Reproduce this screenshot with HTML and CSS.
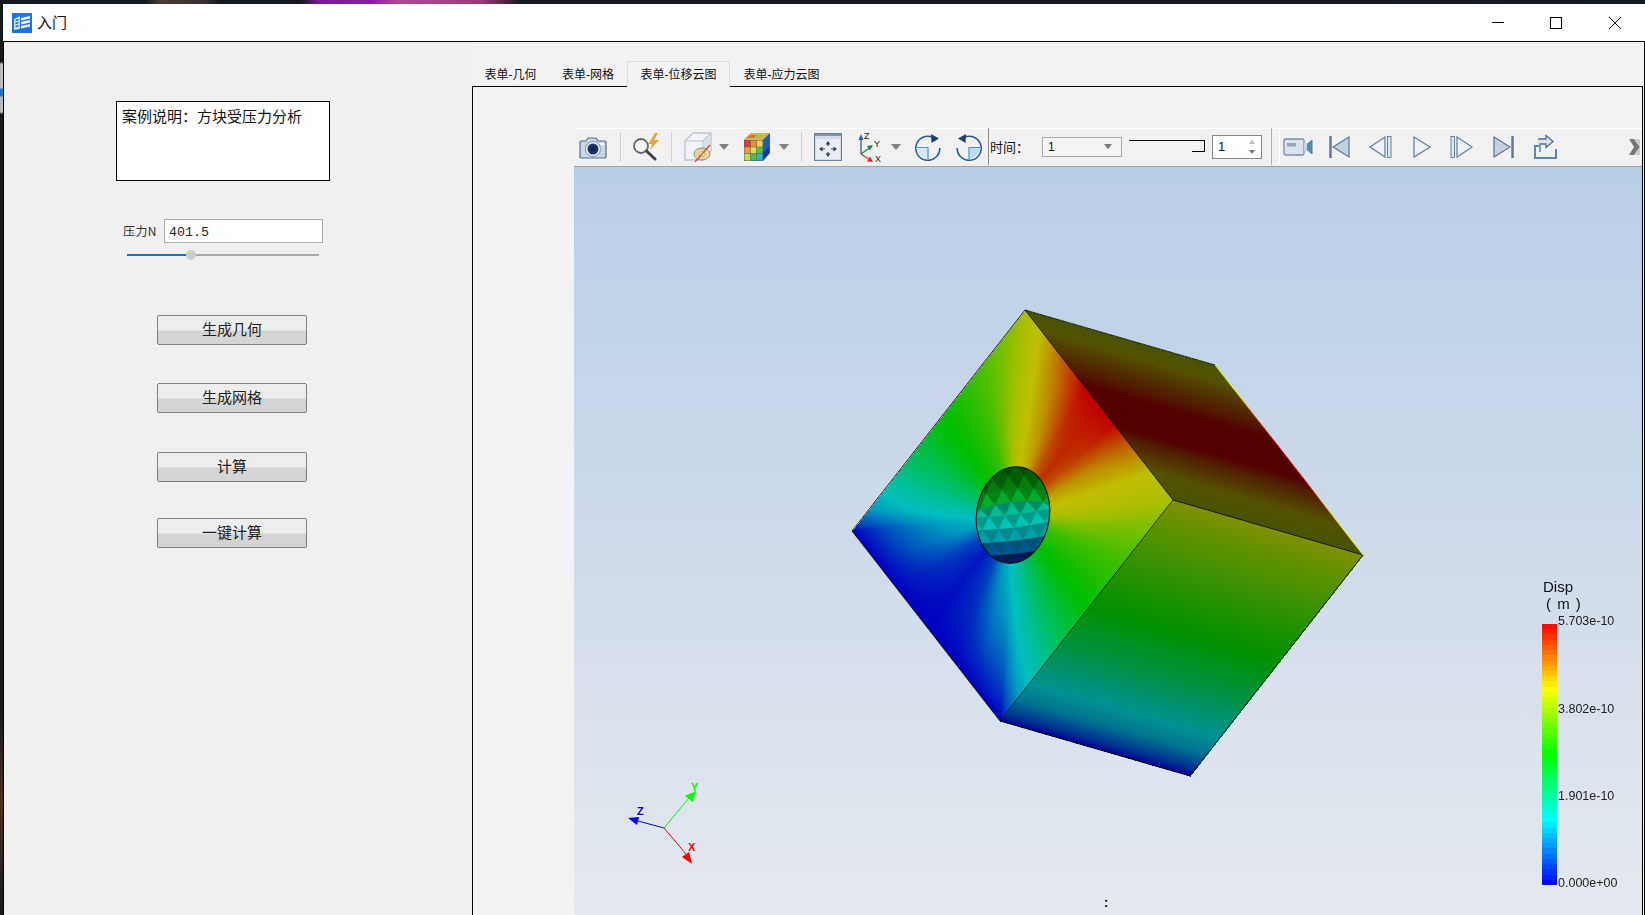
FILE: index.html
```html
<!DOCTYPE html>
<html lang="zh">
<head>
<meta charset="utf-8">
<title>入门</title>
<link rel="stylesheet" href="styles.css">
</head>
<body>
<div class="desk-top"></div>
<div class="shell">
  <div class="desk-left"></div>
  <div class="window">
    <header class="titlebar">
      <svg class="app-icon" viewBox="0 0 20 20">
        <rect width="20" height="20" fill="#1b74e4"/>
        <path d="M2 6 L8 3 L8 16 L2 17 Z" fill="#cfe2fb"/>
        <path d="M3.5 7.5 L6.5 6.5 M3.5 10.5 L6.5 9.5 M3.5 13.5 L6.5 12.5" stroke="#1b74e4" stroke-width="1.4"/>
        <path d="M9 5 L18 3 L18 5.5 L9 7.5 Z M9 9 L18 7 L18 9.5 L9 11.5 Z M9 13 L18 11 L18 13.5 L9 15.5 Z" fill="#fff"/>
      </svg>
      <span class="title">入门</span>
      <div class="win-buttons">
        <svg class="wb wb-min" viewBox="0 0 12 12"><path d="M0 5.5 H12" stroke="#000"/></svg>
        <svg class="wb wb-max" viewBox="0 0 12 12"><rect x=".5" y=".5" width="11" height="11" fill="none" stroke="#000"/></svg>
        <svg class="wb wb-close" viewBox="0 0 12 12"><path d="M0 0 L12 12 M12 0 L0 12" stroke="#000" stroke-width="1"/></svg>
      </div>
    </header>
    <div class="content">
      <aside class="form">
        <div class="note">案例说明&#xFF1A;方块受压力分析</div>
        <div class="pressure">
          <label class="pressure-label">压力N</label>
          <div class="pressure-input">401.5</div>
        </div>
        <div class="slider">
          <div class="slider-fill"></div>
          <div class="slider-knob"></div>
          <div class="slider-rest"></div>
        </div>
        <button class="btn btn-1">生成几何</button>
        <button class="btn btn-2">生成网格</button>
        <button class="btn btn-3">计算</button>
        <button class="btn btn-4">一键计算</button>
      </aside>
      <main class="tabs-area">
        <nav class="tabbar">
          <div class="tab tab-a">表单-几何</div>
          <div class="tab tab-b">表单-网格</div>
          <div class="tab tab-c active">表单-位移云图</div>
          <div class="tab tab-c">表单-应力云图</div>
        </nav>
        <section class="pane">
          <div class="toolbar">
            <svg class="ic i-cam" viewBox="0 0 28 24">
              <path d="M2 6 H7 L9 3 H17 L19 6 H26 Q27 6 27 7 V22 Q27 23 26 23 H2 Q1 23 1 22 V7 Q1 6 2 6Z" fill="#c9d6e8" stroke="#55718f" stroke-width="1.2"/>
              <circle cx="14" cy="14" r="7.5" fill="#eef3f9" stroke="#7d95b5"/>
              <circle cx="14" cy="14" r="5.5" fill="#1d3566"/>
              <circle cx="14" cy="14" r="2.5" fill="#13244a"/>
              <rect x="21" y="8" width="4" height="2" fill="#fff"/>
            </svg>
            <i class="sep s-1"></i>
            <svg class="ic i-mag" viewBox="0 0 30 30">
              <path d="M24 1 L17 12 H21 L19 18 L28 8 H23 L27 1Z" fill="#eda33a"/>
              <circle cx="10" cy="14" r="7" fill="#f4f6f8" stroke="#666a70" stroke-width="1.8"/>
              <path d="M15.5 19 L24 27" stroke="#3f424a" stroke-width="3" stroke-linecap="round"/>
            </svg>
            <i class="sep s-2"></i>
            <svg class="ic i-box" viewBox="0 0 28 30">
              <path d="M1 9 L9 1 H27 V19 L19 28 H1Z" fill="#f0f3f7" stroke="#bcc5d2" stroke-width="1.4"/>
              <path d="M1 9 H19 V28 M19 9 L27 1" fill="none" stroke="#bcc5d2" stroke-width="1.2"/>
              <path d="M19.5 9 L26.5 2 V15 L19.5 20Z" fill="#d9dfe9"/>
              <ellipse cx="18" cy="22" rx="8" ry="6" fill="#e9d69a" stroke="#8a8e98"/>
              <ellipse cx="18" cy="22" rx="3" ry="2.3" fill="#f5efcd" stroke="#b99b52" stroke-width=".7"/>
              <path d="M11 30 L26 13" stroke="#d0532c" stroke-width="1.3"/>
            </svg>
            <svg class="ic i-arrow a-1" viewBox="0 0 10 6"><path d="M0 0 H10 L5 6Z" fill="#808080"/></svg>
            <svg class="ic i-cube" viewBox="0 0 28 30">
              <path d="M1 8 L8 1 H27 V21 L20 29 H1Z" fill="#3f5f9f"/>
              <path d="M1 8 H20 L27 1 H8Z" fill="#d9b24e"/>
              <path d="M3 6 H11 L14 3 H8Z" fill="#e2733b"/><path d="M11 6 H19 L23 3 H14Z" fill="#9fc25a"/>
              <rect x="1.5" y="8.5" width="6" height="6.5" fill="#e33b2c"/><rect x="7.5" y="8.5" width="6" height="6.5" fill="#ee8d2d"/><rect x="13.5" y="8.5" width="6" height="6.5" fill="#f2d531"/>
              <rect x="1.5" y="15" width="6" height="6.5" fill="#ef9d2d"/><rect x="7.5" y="15" width="6" height="6.5" fill="#e8dd3a"/><rect x="13.5" y="15" width="6" height="6.5" fill="#59c04a"/>
              <rect x="1.5" y="21.5" width="6" height="7" fill="#cddb3d"/><rect x="7.5" y="21.5" width="6" height="7" fill="#4dbb4f"/><rect x="13.5" y="21.5" width="6" height="7" fill="#2fb3c4"/>
              <path d="M20 8.5 L26.5 2 V14 L20 21Z" fill="#1e5fb4"/><path d="M20 21 L26.5 14 V21 L20 28.5Z" fill="#1636a3"/>
              <path d="M1 15 H20 M1 21.5 H20 M7.5 8 V29 M13.5 8 V29" stroke="#5c6a4a" stroke-width=".5"/>
            </svg>
            <svg class="ic i-arrow a-2" viewBox="0 0 10 6"><path d="M0 0 H10 L5 6Z" fill="#808080"/></svg>
            <i class="sep s-3"></i>
            <svg class="ic i-fit" viewBox="0 0 28 28">
              <rect x=".5" y=".5" width="27" height="27" fill="#d4dae5" stroke="#6a7f9d"/>
              <rect x="1" y="1" width="26" height="2" fill="#7c92b2"/>
              <rect x="2" y="6" width="24" height="20" fill="#e9edf2"/>
              <path d="M14 8 L11.5 11.5 H16.5Z M14 24 L11.5 20.5 H16.5Z M5 16 L8.5 13.5 V18.5Z M23 16 L19.5 13.5 V18.5Z" fill="#2d3f5c"/>
              <path d="M14 11 V13 M14 19 V21 M8 16 H11 M17 16 H20" stroke="#2d3f5c" stroke-width="1.2"/>
            </svg>
            <svg class="ic i-axes" viewBox="0 0 24 32">
              <path d="M3 23 V7" stroke="#2f5fb0" stroke-width="1.3"/><path d="M3 3 L0.5 9 H5.5Z" fill="#2f5fb0"/>
              <path d="M3 23 L13 16" stroke="#1f8a3c" stroke-width="1.3"/><path d="M15 14 L9 15 L12 19.5Z" fill="#1f8a3c"/>
              <path d="M3 23 L12 29" stroke="#d83232" stroke-width="1.3"/><path d="M15 31 L9 30.5 L12 25.5Z" fill="#d83232"/>
              <text x="6" y="8" class="axes-t">Z</text><text x="16" y="16" class="axes-t">Y</text><text x="17" y="31" class="axes-t">X</text>
            </svg>
            <svg class="ic i-arrow a-3" viewBox="0 0 10 6"><path d="M0 0 H10 L5 6Z" fill="#808080"/></svg>
            <svg class="ic i-rot" viewBox="0 0 26 28">
              <path d="M18 4.5 A12 12 0 1 0 24.8 15" fill="none" stroke="#2c5a92" stroke-width="1.6"/>
              <path d="M16 1 L24 5.5 L16.5 10Z" fill="#1f3f6f"/>
              <path d="M1 15 H12.5 V26 Q5 25 1 15Z" fill="#d6e6f4"/>
              <path d="M1 14.5 H13 V26" fill="none" stroke="#3b9bd5" stroke-width="1.2"/>
            </svg>
            <svg class="ic i-rot2" viewBox="0 0 26 28">
              <path d="M8 4.5 A12 12 0 1 1 1.2 15" fill="none" stroke="#2c5a92" stroke-width="1.6"/>
              <path d="M10 1 L2 5.5 L9.5 10Z" fill="#1f3f6f"/>
              <path d="M25 15 H13.5 V26 Q21 25 25 15Z" fill="#bcdcf2"/>
              <path d="M25 14.5 H13 V26" fill="none" stroke="#3b9bd5" stroke-width="1.2"/>
            </svg>
            <i class="sep-dark"></i>
            <span class="time-label">时间&#xFF1A;</span>
            <div class="combo"><span>1</span><svg class="combo-arrow" viewBox="0 0 8 5"><path d="M0 0 H8 L4 5Z" fill="#777"/></svg></div>
            <div class="t-slider"><div class="t-line"></div><div class="t-handle"></div></div>
            <div class="spin"><span>1</span>
              <svg class="spin-arrows" viewBox="0 0 6 14"><path d="M3 0 L6 4 H0Z" fill="#bbb"/><path d="M3 14 L6 10 H0Z" fill="#777"/></svg>
            </div>
            <i class="sep s-4"></i>
            <div class="toolbar2">
              <svg class="ic i-rec" viewBox="0 0 30 20">
                <rect x="1" y="2" width="20" height="16" rx="1.5" fill="#dde3ec" stroke="#7a90ad" stroke-width="1.3"/>
                <rect x="4" y="6" width="9" height="3.5" fill="#97a6ba"/>
                <path d="M21 10 L29 3 V17Z" fill="#4f8fb8" stroke="#5a7a9f"/>
                <rect x="21" y="6" width="3" height="8" fill="#bcd9ee"/>
              </svg>
              <svg class="ic i-first" viewBox="0 0 21 24"><path d="M1.5 1 V23" stroke="#5a7699" stroke-width="2.4"/><path d="M20 2 L4 12 L20 22Z" fill="#c4cfdf" stroke="#5a7699" stroke-width="1.2"/></svg>
              <svg class="ic i-prev" viewBox="0 0 24 24"><path d="M17 2 L2 12 L17 22Z" fill="#f0f2f6" stroke="#6a84a8" stroke-width="1.3"/><rect x="19.5" y="1.5" width="3.5" height="21" fill="#dfe5ee" stroke="#6a84a8"/></svg>
              <svg class="ic i-play" viewBox="0 0 18 24"><path d="M1 2 L17 12 L1 22Z" fill="#f0f2f6" stroke="#6a84a8" stroke-width="1.3"/></svg>
              <svg class="ic i-next" viewBox="0 0 24 24"><rect x="1" y="1.5" width="3.5" height="21" fill="#dfe5ee" stroke="#6a84a8"/><path d="M7 2 L22 12 L7 22Z" fill="#f0f2f6" stroke="#6a84a8" stroke-width="1.3"/></svg>
              <svg class="ic i-last" viewBox="0 0 21 24"><path d="M1 2 L17 12 L1 22Z" fill="#c4cfdf" stroke="#5a7699" stroke-width="1.2"/><path d="M19.5 1 V23" stroke="#5a7699" stroke-width="2.4"/></svg>
              <svg class="ic i-export" viewBox="0 0 24 26">
                <path d="M7 12 H2 V24 H23 V15" fill="none" stroke="#5f84ae" stroke-width="2"/>
                <path d="M7 18 V10 H13 V13.5 L20 7.5 L13 1.5 V5 H5" fill="#dce6f1" stroke="#4d729c" stroke-width="1.3"/>
              </svg>
              <svg class="ic i-ext" viewBox="0 0 11 16"><path d="M0 0 H5 L11 8 L5 16 H0 L5 8Z" fill="#777"/><path d="M5 0 L11 8 L5 16 H11 V0Z" fill="#ccc"/></svg>
            </div>
          </div>
          <div class="viewport">
            <canvas id="scene" class="scene" width="1069" height="748"></canvas>
            <svg class="triad" viewBox="0 0 110 100">
              <path d="M44 56 L18 49" stroke="#00f"/><path d="M8 46 L19 45 L17 53Z" fill="#00f"/>
              <path d="M44 56 L69 26" stroke="#0f0"/><path d="M76 19 L73 30 L65 24Z" fill="#0f0"/>
              <path d="M44 56 L66 82" stroke="#f00"/><path d="M72 92 L62 85 L69 80Z" fill="#f00"/>
              <text x="17" y="43" class="triad-t t-z">Z</text>
              <text x="71" y="19" class="triad-t t-y">Y</text>
              <text x="68" y="79" class="triad-t t-x">X</text>
            </svg>
            <div class="legend-title">Disp<span class="legend-unit">( m )</span></div>
            <div id="bar" class="legend-bar"></div>
            <div class="legend-val v-1">5.703e-10</div>
            <div class="legend-val v-2">3.802e-10</div>
            <div class="legend-val v-3">1.901e-10</div>
            <div class="legend-val v-4">0.000e+00</div>
            <div class="dots">:</div>
          </div>
        </section>
      </main>
    </div>
  </div>
</div>
<script src="scene.js"></script>
</body>
</html>
```
FILE: styles.css
```css
* { box-sizing: border-box; }
html, body { margin: 0; height: 100%; overflow: hidden; }
body {
  display: flex; flex-direction: column; height: 915px; background: #14181f;
  font-family: "Noto Sans CJK SC", "Liberation Sans", sans-serif;
}
.desk-top {
  height: 4px; flex: none;
  background: linear-gradient(90deg, #14181f 0, #14181f 145px, #4a3a35 160px, #3a3030 205px, #14181f 220px, #14181f 300px, #7a1a9a 320px, #8a1aa8 370px, #b04a90 400px, #a03878 480px, #1a1a24 520px, #14181f 100%);
}
.shell { flex: 1; display: flex; min-height: 0; }
.desk-left {
  width: 3px; flex: none;
  background: linear-gradient(180deg, #14181f 0, #14181f 58px, #b8bcc2 60px, #b8bcc2 84px, #1e78c8 85px, #1e78c8 92px, #b8bcc2 93px, #b8bcc2 108px, #14181f 110px, #14181f 700px, #4a3020 800px, #14181f 100%);
}
.window { flex: 1; display: flex; flex-direction: column; min-width: 0; }

.titlebar {
  height: 38px; flex: none; background: #fff; border-bottom: 1px solid #000;
  display: flex; align-items: center; padding-left: 9px;
}
.app-icon { width: 20px; height: 20px; }
.title { margin-left: 5px; padding-bottom: 2px; font-size: 15px; color: #111; }
.win-buttons { margin-left: auto; display: flex; align-items: center; }
.wb { width: 12px; height: 12px; display: block; }
.wb-max { margin-left: 46px; }
.wb-close { margin-left: 47px; margin-right: 24px; }

.content {
  flex: 1; display: flex; min-height: 0; background: #f0f0f0;
  border-left: 1px solid #000; border-right: 1px solid #000;
}
.form { width: 468px; flex: none; display: flex; flex-direction: column; align-items: flex-start; }
.note {
  margin: 59px 0 0 112px; width: 214px; height: 80px; background: #fff; border: 1px solid #000;
  font-size: 15px; line-height: 18px; padding: 5px 0 0 5px; color: #111;
}
.pressure { display: flex; align-items: center; margin: 38px 0 0 119px; height: 24px; }
.pressure-label { width: 41px; padding-bottom: 2px; font-size: 12px; letter-spacing: .4px; color: #333; }
.pressure-input {
  width: 159px; height: 24px; background: #fff; border: 1px solid #aaa;
  font: 13.3px/24px "Liberation Mono", monospace; padding: 1px 0 0 4px; color: #222;
}
.slider { position: relative; display: flex; align-items: center; margin: 6px 0 0 123px; width: 192px; height: 12px; }
.slider-fill { width: 59px; height: 2px; background: #1a6fc0; }
.slider-rest { flex: 1; height: 2px; background: #aaa; }
.slider-knob { width: 10px; height: 10px; border-radius: 50%; background: #cdcdcd; flex: none; }

.btn {
  display: block; margin-left: 153px; width: 150px; height: 30px; padding: 0 0 2px;
  border: 1px solid #808080; border-radius: 2px;
  background: linear-gradient(180deg, #ededed 0, #ededed 50%, #d4d4d4 54%, #d4d4d4 100%);
  font: 15px/26px "Noto Sans CJK SC", sans-serif; color: #222;
}
.btn-1 { margin-top: 54px; }
.btn-2 { margin-top: 38px; }
.btn-3 { margin-top: 39px; }
.btn-4 { margin-top: 36px; }

.tabs-area { flex: 1; min-width: 0; display: flex; flex-direction: column; padding-right: 1px; background: #f2f2f2; }
.tabbar { height: 44px; flex: none; display: flex; align-items: flex-end; position: relative; z-index: 1; }
.tab { height: 25px; text-align: center; font: 12px/29px "Liberation Sans", "Noto Sans CJK SC", sans-serif; color: #111; }
.tab-a { width: 77px; }
.tab-b { width: 78px; }
.tab-c { width: 103px; }
.active {
  background: #f2f2f2; border: 1px solid #dcdcdc; border-bottom: 0;
  line-height: 27px; margin-bottom: -1px; height: 26px;
}
.pane {
  flex: 1; min-height: 0; display: flex; flex-direction: column; overflow: hidden;
  border: 1px solid #000; border-bottom: 0; padding: 41px 0 0 101px; background: #f2f2f2;
}

.toolbar {
  height: 39px; flex: none; display: flex; align-items: center; padding-bottom: 2px;
  background: #f1f1f1; border-top: 1px solid #fff; border-bottom: 1px solid #a2a2a2;
}
.ic { display: block; flex: none; }
.sep { display: block; width: 1px; height: 30px; background: #d0d0d0; flex: none; }
.sep-dark { display: block; width: 1px; height: 37px; background: #8c8c8c; flex: none; margin-left: 6px; }
.i-cam { width: 28px; height: 24px; margin-left: 5px; }
.s-1 { margin-left: 13px; }
.i-mag { width: 30px; height: 30px; margin-left: 10px; }
.s-2 { margin-left: 10px; }
.i-box { width: 28px; height: 30px; margin-left: 12px; }
.i-arrow { width: 10px; height: 6px; }
.a-1 { margin-left: 7px; }
.i-cube { width: 28px; height: 30px; margin-left: 14px; }
.a-2 { margin-left: 8px; }
.s-3 { margin-left: 12px; }
.i-fit { width: 28px; height: 28px; margin-left: 12px; }
.i-axes { width: 24px; height: 32px; margin-left: 16px; }
.axes-t { font: 9px "Liberation Sans", sans-serif; fill: #222; }
.a-3 { margin-left: 9px; }
.i-rot { width: 26px; height: 28px; margin-left: 14px; }
.i-rot2 { width: 26px; height: 28px; margin-left: 15px; }
.time-label { width: 39px; margin-left: 1px; font-size: 13px; color: #111; white-space: nowrap; flex: none; }
.combo {
  width: 80px; height: 20px; margin-left: 13px; flex: none; border: 1px solid #aaa; background: #f4f4f4;
  display: flex; align-items: center; justify-content: space-between; padding: 0 9px 0 5px;
  font: 12px "Liberation Sans", sans-serif; color: #111;
}
.combo-arrow { width: 8px; height: 5px; }
.t-slider { position: relative; width: 76px; height: 14px; margin-left: 7px; flex: none; }
.t-line { height: 1.5px; background: #000; }
.t-handle { position: absolute; right: 0; top: 1px; width: 13px; height: 11px; border-right: 1px solid #000; border-bottom: 1px solid #000; }
.spin {
  width: 50px; height: 24px; margin-left: 7px; flex: none; background: #fff; border: 1px solid #888;
  display: flex; align-items: center; justify-content: space-between; padding: 0 6px 0 5px;
  font: 13px "Liberation Sans", sans-serif; color: #111;
}
.spin-arrows { width: 6px; height: 14px; }
.s-4 { margin-left: 9px; height: 37px; background: #b0b0b0; }
.toolbar2 {
  flex: 1; align-self: stretch; display: flex; align-items: center; margin-left: 7px;
  border-left: 1px solid #fff; min-width: 0;
}
.i-rec { width: 30px; height: 20px; margin-left: 3px; }
.i-first { width: 21px; height: 24px; margin-left: 16px; }
.i-prev { width: 24px; height: 24px; margin-left: 18px; }
.i-play { width: 18px; height: 24px; margin-left: 21px; }
.i-next { width: 24px; height: 24px; margin-left: 19px; }
.i-last { width: 21px; height: 24px; margin-left: 19px; }
.i-export { width: 24px; height: 26px; margin-left: 19px; }
.i-ext { width: 11px; height: 16px; margin-left: auto; margin-right: 2px; }

.viewport {
  flex: 1; position: relative; min-height: 0; overflow: hidden;
  background: linear-gradient(180deg, #b9cde4 0, #e5e9ef 748px);
}
.scene { position: absolute; left: 0; top: 0; }
.triad { position: absolute; left: 46px; top: 605px; width: 110px; height: 100px; }
.triad path { stroke-width: 1; }
.triad-t { font: bold 11px "Liberation Sans", sans-serif; }
.t-z { fill: #00f; } .t-y { fill: #0f0; } .t-x { fill: #f00; }
.legend-title { position: absolute; left: 969px; top: 411px; font: 15px/17px "Liberation Sans", sans-serif; color: #111; }
.legend-unit { display: block; padding-left: 3px; word-spacing: 2px; }
.legend-bar { position: absolute; left: 968px; top: 457px; width: 15px; height: 261px; }
.legend-val { position: absolute; left: 984px; font: 12.5px/14px "Liberation Sans", sans-serif; color: #222; }
.v-1 { top: 447px; } .v-2 { top: 535px; } .v-3 { top: 622px; } .v-4 { top: 709px; }
.dots { position: absolute; left: 530px; top: 728px; font: bold 13px/16px "Liberation Sans", sans-serif; color: #000; }
```
FILE: scene.js
```js
(function () {
  var ox = 574, oy = 167;
  var cv = document.getElementById('scene');
  var ctx = cv.getContext('2d');
  var W = cv.width, H = cv.height;
  var img = ctx.createImageData(W, H);

  function lut(t, x) {
    if (x <= t[0][0]) return t[0][1];
    for (var i = 1; i < t.length; i++) {
      if (x <= t[i][0]) {
        var k = (x - t[i - 1][0]) / (t[i][0] - t[i - 1][0]);
        return t[i - 1][1] + k * (t[i][1] - t[i - 1][1]);
      }
    }
    return t[t.length - 1][1];
  }
  function ramp(f) {
    f = Math.max(0, Math.min(1, f)) * 4;
    if (f < 1) return [0, f, 1];
    if (f < 2) return [0, 1, 2 - f];
    if (f < 3) return [f - 2, 1, 0];
    return [1, 4 - f, 0];
  }
  var edgeA = [[0, 0.0], [0.03, 0.08], [0.1, 0.2], [0.2, 0.27], [0.35, 0.39], [0.52, 0.5], [0.8, 0.62], [1, 0.72]];
  var edgeTC = [[0, 0.72], [0.1, 0.75], [0.26, 0.88], [0.4, 1], [0.6, 1], [0.7, 0.88], [0.85, 0.75], [1, 0.72]];
  var hub = [[0, 0.93], [12, 0.88], [25, 0.79], [38, 0.75], [50, 0.72], [65, 0.58], [80, 0.52], [90, 0.5], [110, 0.38], [127, 0.28], [145, 0.22], [160, 0.1], [180, 0.03]];

  function faceA(a, b) {
    var da = a - 0.5, db = b - 0.5;
    var s = Math.min(1, 2 * Math.max(Math.abs(da), Math.abs(db)));
    var phi = Math.abs(Math.atan2(db, da)) * 180 / Math.PI;
    var h = lut(hub, phi);
    var e;
    if (s < 1e-4) return h;
    var ba = 0.5 + da / s, bb = 0.5 + db / s;
    if (ba >= 0.999) e = lut(edgeTC, bb);
    else if (ba <= 0.001) e = 0;
    else e = lut(edgeA, ba);
    var w = Math.pow(s, 2.2);
    return h * (1 - w) + e * w;
  }
  var L = [852, 531], T = [1025, 310], B = [1000, 721], C = [1173, 500], Rt = [1215, 365], R = [1363, 555], Bo = [1190, 776];
  var faces = [
    { o: L, e1: [T[0] - L[0], T[1] - L[1]], e2: [B[0] - L[0], B[1] - L[1]], shade: 0.75, f: faceA },
    { o: T, e1: [Rt[0] - T[0], Rt[1] - T[1]], e2: [C[0] - T[0], C[1] - T[1]], shade: 0.32, f: function (u, v) { return lut(edgeTC, v); } },
    { o: C, e1: [R[0] - C[0], R[1] - C[1]], e2: [B[0] - C[0], B[1] - C[1]], shade: 0.57, f: function (u, w) { return lut(edgeA, 1 - w); } }
  ];
  faces.forEach(function (fc) {
    var det = fc.e1[0] * fc.e2[1] - fc.e1[1] * fc.e2[0];
    var xs = [0, fc.e1[0], fc.e2[0], fc.e1[0] + fc.e2[0]], ys = [0, fc.e1[1], fc.e2[1], fc.e1[1] + fc.e2[1]];
    var x0 = Math.floor(fc.o[0] + Math.min.apply(0, xs)), x1 = Math.ceil(fc.o[0] + Math.max.apply(0, xs));
    var y0 = Math.floor(fc.o[1] + Math.min.apply(0, ys)), y1 = Math.ceil(fc.o[1] + Math.max.apply(0, ys));
    for (var y = y0; y <= y1; y++) {
      for (var x = x0; x <= x1; x++) {
        var dx = x - fc.o[0], dy = y - fc.o[1];
        var p = (dx * fc.e2[1] - dy * fc.e2[0]) / det;
        var q = (fc.e1[0] * dy - fc.e1[1] * dx) / det;
        if (p < 0 || p > 1 || q < 0 || q > 1) continue;
        var c = ramp(fc.f(p, q));
        var i = ((y - oy) * W + (x - ox)) * 4;
        img.data[i] = c[0] * 255 * fc.shade;
        img.data[i + 1] = c[1] * 255 * fc.shade;
        img.data[i + 2] = c[2] * 255 * fc.shade;
        img.data[i + 3] = 255;
      }
    }
  });
  ctx.putImageData(img, 0, 0);
  ctx.translate(-ox, -oy);

  function css(c, s) {
    return 'rgb(' + Math.round(c[0] * 255 * s) + ',' + Math.round(c[1] * 255 * s) + ',' + Math.round(c[2] * 255 * s) + ')';
  }
  function line(a, b, col, w) {
    ctx.strokeStyle = col; ctx.lineWidth = w || 1;
    ctx.beginPath(); ctx.moveTo(a[0], a[1]); ctx.lineTo(b[0], b[1]); ctx.stroke();
  }
  var dark = '#14140a';
  [[T, C], [C, R], [C, B], [L, T], [L, B], [T, Rt], [B, Bo], [R, Bo]].forEach(function (e) { line(e[0], e[1], dark, 0.9); });
  var n = 30;
  for (var i = 0; i < n; i++) {
    var k0 = i / n, k1 = (i + 1) / n;
    line([Rt[0] + (R[0] - Rt[0]) * k0, Rt[1] + (R[1] - Rt[1]) * k0], [Rt[0] + (R[0] - Rt[0]) * k1, Rt[1] + (R[1] - Rt[1]) * k1], css(ramp(lut(edgeTC, k0)), 0.9), 1);
  }

  // hole: faceted inner surface of the cylinder
  var hx = 1013, hy = 515, rx = 36.5, ry = 48.5, rot = 0.15;
  var tF = [[0, 0.5], [0.3, 0.46], [0.42, 0.31], [0.7, 0.24], [0.85, 0.15], [1, 0.05]];
  var tS = [[0, 0.3], [0.12, 0.38], [0.3, 0.58], [0.55, 0.7], [0.8, 0.56], [1, 0.32]];
  ctx.save();
  ctx.beginPath();
  ctx.ellipse(hx, hy, rx, ry, rot, 0, Math.PI * 2);
  ctx.clip();
  ctx.translate(hx, hy);
  ctx.rotate(-0.12);
  var rowH = 13, colW = 16;
  var bend = 0.004;
  function by(x, y) { return y + bend * x * x * (y < 0 ? 1 : -0.3); }
  for (var r = -5; r <= 5; r++) {
    for (var c = -5; c <= 5; c++) {
      var y0 = r * rowH, y1 = y0 + rowH;
      var x0 = c * colW + (r % 2 ? colW / 2 : 0);
      var tris = [
        [[x0, y1], [x0 + colW / 2, y0], [x0 + colW, y1], 0.07],
        [[x0 + colW / 2, y0], [x0 + colW, y1], [x0 + colW * 1.5, y0], -0.07]
      ];
      tris.forEach(function (t) {
        var my = (t[0][1] + t[1][1] + t[2][1]) / 3;
        var tt = Math.max(0, Math.min(1, (my + ry) / (2 * ry)));
        var sh = lut(tS, tt) + t[3] * (tt < 0.28 ? 0.5 : 1.2);
        ctx.fillStyle = css(ramp(lut(tF, tt)), sh);
        ctx.strokeStyle = ctx.fillStyle;
        ctx.lineWidth = 0.6;
        ctx.beginPath();
        ctx.moveTo(t[0][0], by(t[0][0], t[0][1]));
        ctx.lineTo(t[1][0], by(t[1][0], t[1][1]));
        ctx.lineTo(t[2][0], by(t[2][0], t[2][1]));
        ctx.closePath();
        ctx.fill(); ctx.stroke();
      });
    }
  }
  ctx.restore();
  ctx.strokeStyle = '#06140f';
  ctx.lineWidth = 1.1;
  ctx.beginPath();
  ctx.ellipse(hx, hy, rx, ry, rot, 0, Math.PI * 2);
  ctx.stroke();

  // colour legend: banded ramp
  var bands = 50, stops = [];
  for (var j = 0; j < bands; j++) {
    var col = css(ramp(1 - (j + 0.5) / bands), 1);
    stops.push(col + ' ' + (j * 100 / bands) + '%', col + ' ' + ((j + 1) * 100 / bands) + '%');
  }
  document.getElementById('bar').style.background = 'linear-gradient(180deg,' + stops.join(',') + ')';
})();
```
